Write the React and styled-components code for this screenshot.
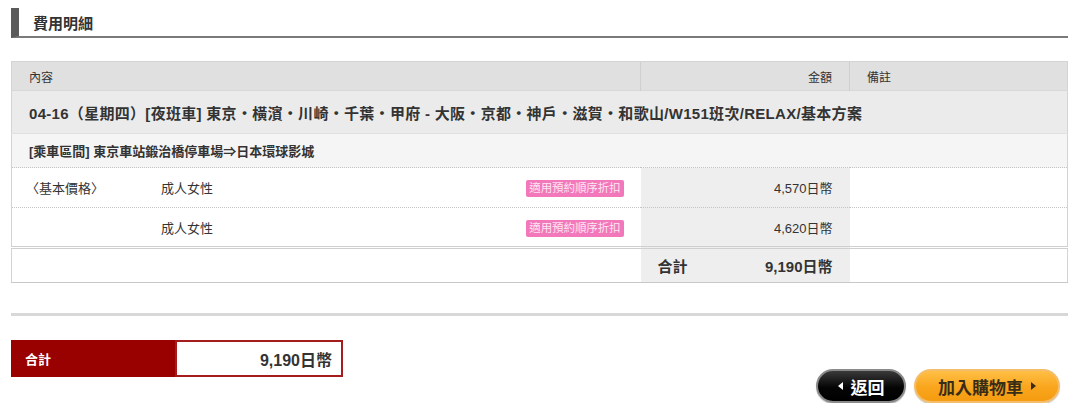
import React from "react";
import styled, { createGlobalStyle } from "styled-components";

const GlobalStyle = createGlobalStyle`
  body {
    margin: 0;
    background: #fff;
    font-family: "Liberation Sans", "Noto Sans CJK TC", sans-serif;
    color: #333;
  }
`;

const Page = styled.div`
  width: 1057px;
  padding: 8px 11px 0;
`;

const Heading = styled.h2`
  margin: 0;
  height: 28px;
  display: flex;
  align-items: center;
  border-left: 8px solid #5a5a5a;
  border-bottom: 2px solid #7a7a7a;
  padding-left: 14px;
  font-size: 15px;
  font-weight: bold;
  color: #333;
`;

const Table = styled.table`
  margin-top: 23px;
  width: 100%;
  border-collapse: collapse;
  border-left: 1px solid #d4d4d4;
  border-right: 1px solid #d4d4d4;
  border-bottom: 1px solid #c8c8c8;
  font-size: 12px;
  table-layout: fixed;
`;

const HeadCell = styled.th`
  height: 28px;
  padding: 0 17px;
  background: #e0e0e0;
  border-left: ${p => (p.$sep ? "1px solid #cfcfcf" : "0")};
  border-top: 1px solid #d4d4d4;
  text-align: ${p => (p.$right ? "right" : "left")};
  font-size: 12px;
  font-weight: normal;
  color: #333;
`;

const TitleCell = styled.td`
  height: 42px;
  padding: 0 17px;
  background: #ebebeb;
  border-top: 1px solid #d8d8d8;
  font-size: 15px;
  letter-spacing: 0.3px;
  font-weight: bold;
  color: #333;
  white-space: nowrap;
`;

const SectionCell = styled.td`
  height: 33px;
  padding: 0 17px;
  background: #f5f5f5;
  border-top: 1px solid #e0e0e0;
  font-size: 13px;
  font-weight: bold;
`;

const ItemRow = styled.tr`
  height: 40px;
  td {
    border-top: 1px dotted #c4c4c4;
  }
`;

const ItemCell = styled.td`
  padding: 0;
  vertical-align: top;
`;

const ItemLine = styled.div`
  display: flex;
  align-items: flex-start;
  padding: 10px 17px 0 14px;
  font-size: 13px;
`;

const ItemLabel = styled.span`
  width: 135px;
  flex: none;
`;

const ItemName = styled.span`
  flex: 1;
`;

const Badge = styled.span`
  margin-top: 2px;
  padding: 2px 3px;
  border-radius: 2px;
  background: #f277bb;
  color: #fde6f2;
  font-size: 11.5px;
  line-height: 13px;
  letter-spacing: -0.1px;
`;

const AmountCell = styled.td`
  padding: 10px 17px 0;
  vertical-align: top;
  background: #eeeeee;
  text-align: right;
  font-size: 13px;
`;

const NoteCell = styled.td`
  background: #fff;
`;

const TotalRow = styled.tr`
  height: 35px;
  td {
    border-top: 3px double #cfcfcf;
  }
`;

const TotalAmount = styled.td`
  padding: 0 17px;
  background: #eeeeee;
  font-size: 15px;
  font-weight: bold;
`;

const TotalInner = styled.div`
  display: flex;
  justify-content: space-between;
`;

const Divider = styled.hr`
  margin: 30px 0 0;
  border: 0;
  height: 3px;
  background: #d8d8d8;
`;

const Bottom = styled.div`
  display: flex;
  justify-content: space-between;
  margin-top: 24px;
`;

const SumBox = styled.div`
  display: flex;
  width: 332px;
  height: 37px;
  align-self: flex-start;
`;

const SumLabel = styled.div`
  width: 150px;
  padding-left: 14px;
  display: flex;
  align-items: center;
  background: #990000;
  color: #fff;
  font-size: 13px;
  font-weight: bold;
`;

const SumValue = styled.div`
  flex: 1;
  display: flex;
  align-items: center;
  justify-content: flex-end;
  padding-right: 9px;
  border: 2px solid #a51c1c;
  background: #fff;
  font-size: 16px;
  font-weight: bold;
  color: #333;
`;

const Buttons = styled.div`
  display: flex;
  gap: 8px;
  margin-top: 29px;
  margin-right: 8px;
`;

const Pill = styled.button`
  height: 34px;
  border-radius: 17px;
  display: flex;
  align-items: center;
  justify-content: center;
  gap: 8px;
  font-family: inherit;
  font-size: 17px;
  font-weight: bold;
  cursor: pointer;
  padding: 0;
  width: ${p => (p.$primary ? "146px" : "90px")};
  color: ${p => (p.$primary ? "#3a2d18" : "#fff")};
  border: 2px solid ${p => (p.$primary ? "#f3bd6c" : "#8a8a8a")};
  background: ${p =>
    p.$primary
      ? "linear-gradient(#ffbf45, #f9a51d 55%, #f59c10)"
      : "linear-gradient(#3a3a3a, #050505 55%, #000)"};
  box-shadow: 0 1px 1px rgba(0, 0, 0, 0.25);
`;

const Arrow = styled.span`
  width: 0;
  height: 0;
  border-top: 4px solid transparent;
  border-bottom: 4px solid transparent;
  ${p =>
    p.$left
      ? "border-right: 5px solid #fff;"
      : "border-left: 5px solid #3a2d18;"}
`;

const items = [
  { label: "〈基本價格〉", name: "成人女性", amount: "4,570日幣" },
  { label: "", name: "成人女性", amount: "4,620日幣" }
];

export default function App() {
  return (
    <Page>
      <GlobalStyle />
      <Heading>費用明細</Heading>
      <Table>
        <colgroup>
          <col />
          <col width="209" />
          <col width="218" />
        </colgroup>
        <thead>
          <tr>
            <HeadCell>內容</HeadCell>
            <HeadCell $right $sep>金額</HeadCell>
            <HeadCell $sep>備註</HeadCell>
          </tr>
        </thead>
        <tbody>
          <tr>
            <TitleCell colSpan={3}>
              04-16（星期四）[夜班車] 東京・橫濱・川崎・千葉・甲府 - 大阪・京都・神戶・滋賀・和歌山/W151班次/RELAX/基本方案
            </TitleCell>
          </tr>
          <tr>
            <SectionCell colSpan={3}>[乘車區間] 東京車站鍛治橋停車場⇒日本環球影城</SectionCell>
          </tr>
          {items.map((it, i) => (
            <ItemRow key={i}>
              <ItemCell>
                <ItemLine>
                  <ItemLabel>{it.label}</ItemLabel>
                  <ItemName>{it.name}</ItemName>
                  <Badge>適用預約順序折扣</Badge>
                </ItemLine>
              </ItemCell>
              <AmountCell>{it.amount}</AmountCell>
              <NoteCell />
            </ItemRow>
          ))}
          <TotalRow>
            <td />
            <TotalAmount>
              <TotalInner>
                <span>合計</span>
                <span>9,190日幣</span>
              </TotalInner>
            </TotalAmount>
            <NoteCell />
          </TotalRow>
        </tbody>
      </Table>
      <Divider />
      <Bottom>
        <SumBox>
          <SumLabel>合計</SumLabel>
          <SumValue>9,190日幣</SumValue>
        </SumBox>
        <Buttons>
          <Pill>
            <Arrow $left />
            返回
          </Pill>
          <Pill $primary>
            加入購物車
            <Arrow />
          </Pill>
        </Buttons>
      </Bottom>
    </Page>
  );
}
